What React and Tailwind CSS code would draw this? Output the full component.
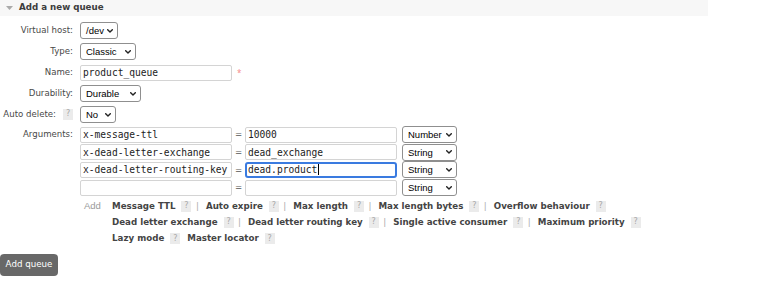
import React from "react";

const SANS = "font-['DejaVu_Sans',Verdana,sans-serif]";

function Help({ className = "" }) {
  return (
    <span
      className={`inline-flex h-[11px] w-[10px] items-center justify-center bg-[#ebebeb] font-['DejaVu_Sans',Verdana,sans-serif] text-[8px] font-normal text-[#a8a8a8] ${className}`}
    >
      ?
    </span>
  );
}

function Chevron() {
  return (
    <svg width="6" height="4" viewBox="0 0 6 4" className="shrink-0">
      <path d="M0.7 0.7 L3 3 L5.3 0.7" fill="none" stroke="#222" strokeWidth="1.4" strokeLinecap="round" strokeLinejoin="round" />
    </svg>
  );
}

function Select({ value, className }) {
  return (
    <div
      className={`flex h-[17px] items-center justify-between rounded-[3px] border border-[#8f8f8f] bg-white pl-[5px] pr-[4px] font-['Liberation_Sans',Arial,sans-serif] text-[9.5px] leading-none text-black ${className}`}
    >
      <span>{value}</span>
      <Chevron />
    </div>
  );
}

function Input({ value = "", focused = false, className = "" }) {
  if (focused) {
    return (
      <div
        className={`flex h-[16px] items-center rounded-[3px] border-2 border-[#3a7be0] bg-white pl-[1px] font-['DejaVu_Sans_Mono',Menlo,monospace] text-[9.6px] leading-none text-[#222] ${className}`}
      >
        <span>{value}</span>
        <span className="ml-[0.5px] inline-block h-[11px] w-px bg-black" />
      </div>
    );
  }
  return (
    <div
      className={`flex h-[16px] items-center rounded-[2px] border border-[#d4d4d4] bg-white pl-[2px] font-['DejaVu_Sans_Mono',Menlo,monospace] text-[9.6px] leading-none text-[#222] ${className}`}
    >
      {value}
    </div>
  );
}

function Label({ children }) {
  return (
    <div className={`flex w-[73px] shrink-0 items-center justify-end ${SANS} text-[8.6px] text-[#484848]`}>
      {children}
    </div>
  );
}

function FormRow({ label, children }) {
  return (
    <div className="flex h-[21px] items-center gap-[7px]">
      <Label>{label}</Label>
      <div className="flex items-center">{children}</div>
    </div>
  );
}

function ArgRow({ k, v, type, focused }) {
  return (
    <div className="flex h-[17.6px] items-center">
      <Input value={k} className="w-[152px]" />
      <span className={`w-[13px] text-center ${SANS} text-[8.6px] text-[#555]`}>=</span>
      <Input value={v} focused={focused} className="w-[152px]" />
      <Select value={type} className="ml-[5px] w-[55px]" />
    </div>
  );
}

function Link({ children }) {
  return <span className="whitespace-nowrap">{children}</span>;
}

function Sep() {
  return <span className="ml-[4.5px] mr-[7px] font-normal text-[#aaa]">|</span>;
}

export default function App() {
  return (
    <div className="h-[284px] w-[763px] bg-white">
      <div className="flex h-[16px] w-[708px] items-center bg-[#f7f7f7]">
        <svg width="7" height="4" viewBox="0 0 7 4" className="ml-[5.5px]">
          <path d="M0 0 L7 0 L3.5 4 Z" fill="#aaa" />
        </svg>
        <span className={`ml-[6.5px] ${SANS} text-[8.7px] font-bold text-[#3c3c3c]`}>Add a new queue</span>
      </div>

      <div className="mt-[4px]">
        <FormRow label="Virtual host:">
          <Select value="/dev" className="w-[38px]" />
        </FormRow>
        <FormRow label="Type:">
          <Select value="Classic" className="w-[56px]" />
        </FormRow>
        <FormRow label="Name:">
          <Input value="product_queue" className="w-[152px]" />
          <span className="ml-[5px] text-[8px] text-[#f58c8c]">*</span>
        </FormRow>
        <FormRow label="Durability:">
          <Select value="Durable" className="w-[61px]" />
        </FormRow>
        <FormRow
          label={
            <>
              <span className="mr-[7px]">Auto delete:</span>
              <Help />
            </>
          }
        >
          <Select value="No" className="w-[36px]" />
        </FormRow>

        <div className="flex gap-[7px] pt-[1px]">
          <div className={`flex h-[17.6px] w-[73px] shrink-0 items-center justify-end ${SANS} text-[8.6px] text-[#484848]`}>
            Arguments:
          </div>
          <div className="flex flex-col">
            <ArgRow k="x-message-ttl" v="10000" type="Number" />
            <ArgRow k="x-dead-letter-exchange" v="dead_exchange" type="String" />
            <ArgRow k="x-dead-letter-routing-key" v="dead.product" type="String" focused />
            <ArgRow k="" v="" type="String" />
          </div>
        </div>

        <div className="ml-[84px] mt-[1.5px] flex">
          <div className="w-[28px] font-['Liberation_Sans',Arial,sans-serif] text-[9.5px] leading-[15px] text-[#9a9a9a]">
            Add
          </div>
          <div className={`flex flex-col ${SANS} text-[8.7px] font-bold text-[#444]`}>
            <div className="flex h-[16.3px] items-center">
              <Link>Message TTL</Link>
              <Help className="ml-[6px]" />
              <Sep />
              <Link>Auto expire</Link>
              <Help className="ml-[6px]" />
              <Sep />
              <Link>Max length</Link>
              <Help className="ml-[6px]" />
              <Sep />
              <Link>Max length bytes</Link>
              <Help className="ml-[6px]" />
              <Sep />
              <Link>Overflow behaviour</Link>
              <Help className="ml-[6px]" />
            </div>
            <div className="flex h-[16.3px] items-center">
              <Link>Dead letter exchange</Link>
              <Help className="ml-[6px]" />
              <Sep />
              <Link>Dead letter routing key</Link>
              <Help className="ml-[6px]" />
              <Sep />
              <Link>Single active consumer</Link>
              <Help className="ml-[6px]" />
              <Sep />
              <Link>Maximum priority</Link>
              <Help className="ml-[6px]" />
            </div>
            <div className="flex h-[16.3px] items-center">
              <Link>Lazy mode</Link>
              <Help className="ml-[6px] mr-[7px]" />
              <Link>Master locator</Link>
              <Help className="ml-[6px]" />
            </div>
          </div>
        </div>

        <button
          className={`mt-[7px] flex h-[22.5px] w-[58px] items-center justify-center rounded-[4px] bg-[#686868] ${SANS} text-[8.7px] text-white`}
        >
          Add queue
        </button>
      </div>
    </div>
  );
}
